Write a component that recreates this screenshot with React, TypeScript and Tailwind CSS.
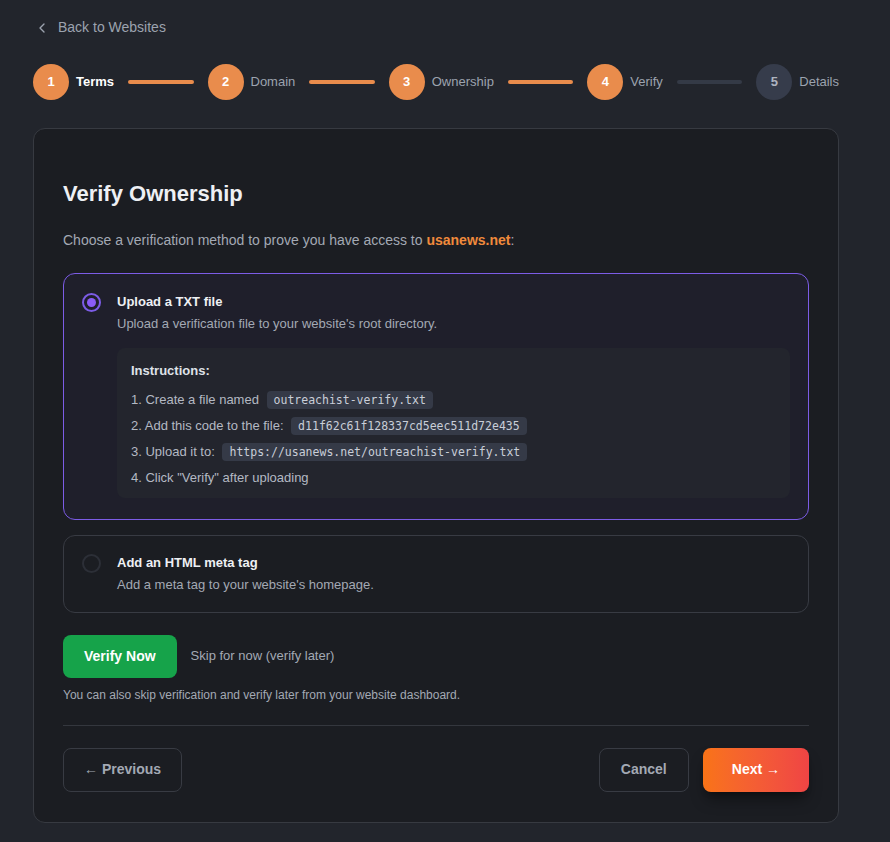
import React, { useState } from 'react';
import { ChevronLeft } from 'lucide-react';

const steps = [
  { n: 1, label: 'Terms', done: true, current: true },
  { n: 2, label: 'Domain', done: true },
  { n: 3, label: 'Ownership', done: true },
  { n: 4, label: 'Verify', done: true },
  { n: 5, label: 'Details', done: false },
];

function Code({ children }: { children: React.ReactNode }) {
  return (
    <code className="ml-1 rounded bg-[#353a47] px-[7px] py-[2px] font-['DejaVu_Sans_Mono',monospace] text-[11.5px] text-[#c9ced8]">
      {children}
    </code>
  );
}

export default function App() {
  const [method, setMethod] = useState<'file' | 'meta'>('file');

  return (
    <div className="min-h-screen bg-[#22252c] pl-[33px] pt-[17px] pb-5 font-['Liberation_Sans',sans-serif] text-[#d1d5db]">
      <div className="w-[806px]">
        <a className="flex items-center gap-2 text-[14px] text-[#9ca3af]">
          <ChevronLeft size={16} strokeWidth={2} className="ml-[1px]" />
          Back to Websites
        </a>

        {/* stepper */}
        <div className="mt-[26px] flex items-center">
          {steps.map((s, i) => (
            <React.Fragment key={s.n}>
              <div className="flex items-center gap-[7px]">
                <div
                  className={
                    'flex h-9 w-9 items-center justify-center rounded-full text-[13px] font-bold ' +
                    (s.done ? 'bg-[#e98c4c] text-white' : 'bg-[#363c4b] text-[#aeb4c0]')
                  }
                >
                  {s.n}
                </div>
                <span className={'text-[13px] ' + (s.current ? 'font-semibold text-white' : 'text-[#9ca3af]')}>
                  {s.label}
                </span>
              </div>
              {i < steps.length - 1 && (
                <div
                  className={
                    'mx-[14px] h-1 flex-1 rounded-full ' + (steps[i + 1].done ? 'bg-[#e98c4c]' : 'bg-[#343a46]')
                  }
                />
              )}
            </React.Fragment>
          ))}
        </div>

        {/* card */}
        <div className="mt-[28px] rounded-xl border border-[#373a41] bg-[#1b1d22] px-[29px] pt-[50px] pb-[30px]">
          <h1 className="text-[22px] font-bold leading-[30px] text-[#eef0f4]">Verify Ownership</h1>
          <p className="mt-[21px] text-[14px] text-[#a3a9b4]">
            Choose a verification method to prove you have access to{' '}
            <span className="font-bold text-[#f08a3c]">usanews.net</span>:
          </p>

          <div className="mt-[22px] flex flex-col gap-[15px]">
            <div
              onClick={() => setMethod('file')}
              className={
                'rounded-xl border px-[18px] pt-[18px] pb-[21px] ' +
                (method === 'file' ? 'border-[#7c5ce6] bg-[#1f1f2b]' : 'border-[#383b43]')
              }
            >
              <div className="flex gap-4">
                <div
                  className={
                    'mt-[1px] flex h-[19px] w-[19px] shrink-0 items-center justify-center rounded-full border-2 ' +
                    (method === 'file' ? 'border-[#7c5ce6]' : 'border-[#30333b]')
                  }
                >
                  {method === 'file' && <div className="h-[9px] w-[9px] rounded-full bg-[#8b5cf6]" />}
                </div>
                <div className="flex-1">
                  <div className="text-[13px] font-semibold leading-[20px] text-[#eef0f4]">Upload a TXT file</div>
                  <div className="mt-[2px] text-[13px] leading-[20px] text-[#a3a9b4]">
                    Upload a verification file to your website's root directory.
                  </div>
                  <div className="mt-[14px] rounded-lg bg-[#23252d] px-[14px] pt-[13px] pb-[7px] text-[13px] text-[#b4b9c3]">
                    <div className="mb-[6px] font-semibold text-[#dfe2e8]">Instructions:</div>
                    <div className="leading-[26px]">
                      <div>
                        1. Create a file named <Code>outreachist-verify.txt</Code>
                      </div>
                      <div>
                        2. Add this code to the file: <Code>d11f62c61f128337cd5eec511d72e435</Code>
                      </div>
                      <div>
                        3. Upload it to: <Code>https://usanews.net/outreachist-verify.txt</Code>
                      </div>
                      <div>4. Click "Verify" after uploading</div>
                    </div>
                  </div>
                </div>
              </div>
            </div>

            <div
              onClick={() => setMethod('meta')}
              className={
                'rounded-xl border px-[18px] py-[17px] ' +
                (method === 'meta' ? 'border-[#7c5ce6] bg-[#1f1f2b]' : 'border-[#383b43]')
              }
            >
              <div className="flex gap-4">
                <div
                  className={
                    'mt-[1px] flex h-[19px] w-[19px] shrink-0 items-center justify-center rounded-full border-2 ' +
                    (method === 'meta' ? 'border-[#7c5ce6]' : 'border-[#2c2f37]')
                  }
                >
                  {method === 'meta' && <div className="h-[9px] w-[9px] rounded-full bg-[#8b5cf6]" />}
                </div>
                <div>
                  <div className="text-[13px] font-semibold leading-[20px] text-[#eef0f4]">Add an HTML meta tag</div>
                  <div className="mt-[2px] text-[13px] leading-[20px] text-[#a3a9b4]">
                    Add a meta tag to your website's homepage.
                  </div>
                </div>
              </div>
            </div>
          </div>

          <div className="mt-[22px] flex items-center gap-[14px]">
            <button className="h-[43px] rounded-lg bg-[#16a34a] px-[21px] text-[14px] font-bold text-white">
              Verify Now
            </button>
            <button className="text-[13px] text-[#a3a9b4]">Skip for now (verify later)</button>
          </div>
          <p className="mt-[8px] text-[12px] text-[#a3a9b4]">
            You can also skip verification and verify later from your website dashboard.
          </p>

          <div className="mt-[21px] border-t border-[#34373e] pt-[22px]">
            <div className="flex items-center justify-between">
              <button className="h-[44px] rounded-lg border border-[#383b43] px-[20px] text-[14px] font-semibold text-[#a3a9b4]">
                ← Previous
              </button>
              <div className="flex gap-[14px]">
                <button className="h-[44px] rounded-lg border border-[#383b43] px-[21px] text-[14px] font-semibold text-[#a3a9b4]">
                  Cancel
                </button>
                <button className="h-[44px] rounded-lg bg-gradient-to-r from-[#f97316] to-[#ef4444] px-[29px] text-[14px] font-bold text-white shadow-lg shadow-black/40">
                  Next →
                </button>
              </div>
            </div>
          </div>
        </div>
      </div>
    </div>
  );
}
